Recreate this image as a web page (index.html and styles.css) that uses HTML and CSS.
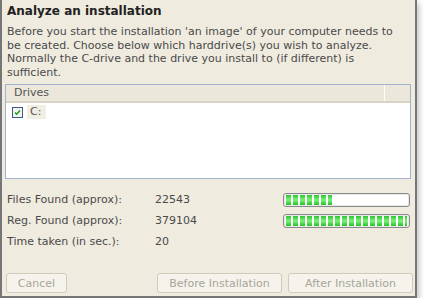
FILE: index.html
```html
<!DOCTYPE html>
<html>
<head>
<meta charset="utf-8">
<link rel="stylesheet" href="styles.css">
</head>
<body>
<div class="window">
  <h1 class="title">Analyze an installation</h1>
  <p class="intro">Before you start the installation 'an image' of your computer needs to be created. Choose below which harddrive(s) you wish to analyze. Normally the C-drive and the drive you install to (if different) is sufficient.</p>
  <div class="list">
    <div class="list-head">
      <span class="col-main">Drives</span>
      <span class="col-rest"></span>
    </div>
    <div class="list-row">
      <span class="check"><svg width="9" height="9" viewBox="0 0 9 9"><path d="M2 4.5 L3.7 6.2 L7 2.5" fill="none" stroke="#21a121" stroke-width="1.6"/></svg></span>
      <span class="drive">C:</span>
    </div>
  </div>
  <div class="stats">
    <div class="stat">
      <span class="label">Files Found (approx):</span>
      <span class="value">22543</span>
      <div class="bar"><div class="fill" style="width:38%"></div></div>
    </div>
    <div class="stat">
      <span class="label">Reg. Found (approx):</span>
      <span class="value">379104</span>
      <div class="bar"><div class="fill" style="width:100%"></div></div>
    </div>
    <div class="stat">
      <span class="label">Time taken (in sec.):</span>
      <span class="value">20</span>
    </div>
  </div>
  <div class="buttons">
    <button class="btn btn-cancel" disabled>Cancel</button>
    <span class="spacer"></span>
    <button class="btn btn-wide" disabled>Before Installation</button>
    <button class="btn btn-wide" disabled>After Installation</button>
  </div>
</div>
</body>
</html>
```
FILE: styles.css
```css
html, body {
  margin: 0;
  padding: 0;
  background: #ffffff;
}
body {
  font-family: "DejaVu Sans", Verdana, sans-serif;
  font-size: 11px;
  color: #4a4a4a;
}
.window {
  box-sizing: border-box;
  width: 417px;
  height: 298px;
  background: #efebdf;
  border-left: 2px solid #767676;
  border-right: 2px solid #767676;
  border-bottom: 2px solid #767676;
  box-shadow: 2px 3px 6px rgba(0,0,0,0.25);
  padding: 3px 4px 0 4px;
  display: flex;
  flex-direction: column;
}
.title {
  margin: 0;
  font-size: 12px;
  font-weight: bold;
  color: #222;
  line-height: 16px;
  padding-left: 1px;
}
.intro {
  margin: 6px 0 0 0;
  width: 398px;
  line-height: 13.5px;
  padding-left: 1px;
  color: #4a4a4a;
}
.list {
  margin-top: 5px;
  height: 95px;
  width: 406px;
  margin-left: -1px;
  box-sizing: border-box;
  border: 1px solid #9db3cf;
  background: #fff;
}
.list-head {
  display: flex;
  height: 16px;
  background: #ebe7da;
  border-bottom: 2px solid #d8d4c6;
  line-height: 16px;
}
.col-main {
  width: 379px;
  padding-left: 8px;
  box-sizing: border-box;
  border-right: 1px solid #fdfcf8;
  color: #555;
}
.col-rest { flex: 1; }
.list-row {
  display: flex;
  align-items: center;
  height: 14px;
  margin-top: 2px;
  padding-left: 6px;
}
.check {
  width: 9px;
  height: 9px;
  border: 1px solid #3d5c85;
  background: #f4f4f0;
  display: flex;
}
.drive {
  margin-left: 4px;
  background: #f1eee3;
  padding: 0 5px 0 3px;
  line-height: 14px;
  color: #555;
}
.stats {
  margin-top: 13px;
  display: flex;
  flex-direction: column;
  gap: 6px;
}
.stat {
  display: flex;
  align-items: center;
  height: 15px;
}
.label {
  width: 148px;
  padding-left: 1px;
}
.value {
  width: 128px;
}
.bar {
  width: 121px;
  height: 10px;
  border: 1px solid #8a8a8a;
  border-radius: 3px;
  background: #fff;
  padding: 1px 2px;
  box-shadow: inset 0 0 0 1px #e8e8e8;
}
.fill {
  height: 100%;
  background:
    repeating-linear-gradient(to right, transparent 0, transparent 5px, #ffffff 5px, #ffffff 7px),
    linear-gradient(to bottom, #2bc72b, #7ff07f 50%, #23c023);
}
.buttons {
  margin-top: auto;
  margin-bottom: 3px;
  margin-right: -2px;
  display: flex;
  gap: 6px;
}
.spacer { flex: 1; }
.btn {
  font-family: "DejaVu Sans", Verdana, sans-serif;
  font-size: 11px;
  height: 20px;
  background: #f5f3ec;
  border: 1px solid #cfcbbd;
  border-radius: 3px;
  color: #a8a597;
  padding: 0;
}
.btn-cancel { width: 61px; }
.btn-wide { width: 125px; }
```
